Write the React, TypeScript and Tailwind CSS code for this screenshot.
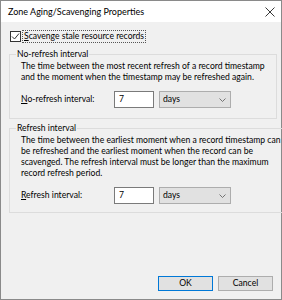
import React from 'react';

const font = { fontFamily: 'Lato, "Liberation Sans", Arial, sans-serif' };

const Chevron = () => (
  <svg width="7" height="4" viewBox="0 0 7 4" fill="none">
    <path d="M0.5 0.5 L3.5 3.5 L6.5 0.5" stroke="#666" strokeWidth="0.9" />
  </svg>
);

const IntervalRow = ({ label, accel }: { label: string; accel: string }) => (
  <div className="flex items-center h-[17px] mt-[8px]">
    <span className="w-[93px]">
      <span className="underline underline-offset-[1px]">{accel}</span>
      {label}
    </span>
    <div className="w-[40px] h-[17px] border border-[#7a7a7a] bg-white flex items-center pl-[4px]">7</div>
    <div className="ml-[5px] w-[72px] h-[17px] border border-[#adadad] bg-[#e1e1e1] flex items-center justify-between pl-[3px] pr-[4px]">
      <span>days</span>
      <Chevron />
    </div>
  </div>
);

const App = () => {
  return (
    <div
      className="w-[282px] h-[300px] border border-[#8a8a8a] bg-[#f0f0f0] flex flex-col text-[8.6px] leading-[11px] text-black whitespace-nowrap"
      style={font}
    >
      <div className="h-[21px] bg-white flex items-center justify-between pl-[7px] pr-[6px]">
        <span className="text-[9px]">Zone Aging/Scavenging Properties</span>
        <svg width="10" height="10" viewBox="0 0 10 10">
          <path d="M0.5 0.5 L9.5 9.5 M9.5 0.5 L0.5 9.5" stroke="#222" strokeWidth="0.9" />
        </svg>
      </div>

      <div className="flex-1 flex flex-col px-[8px] pb-[8px]">
        <div className="flex items-center mt-[8px] ml-[1px]">
          <div className="w-[11px] h-[11px] border border-[#333] bg-white flex items-center justify-center">
            <svg width="9" height="9" viewBox="0 0 9 9" fill="none">
              <path d="M1 4.5 L3.5 7 L8 1.5" stroke="#333" strokeWidth="1" />
            </svg>
          </div>
          <span className="ml-[1px] px-[1px] border border-dotted border-[#555]">
            <span className="underline underline-offset-[1px]">S</span>cavenge stale resource records
          </span>
        </div>

        <fieldset className="mt-[6px] border border-[#dcdcdc] px-[11px] pb-[10px]">
          <legend className="ml-[-5px] px-[1px]">No-refresh interval</legend>
          <p className="mt-[1px]">
            The time between the most recent refresh of a record timestamp
            <br />
            and the moment when the timestamp may be refreshed again.
          </p>
          <IntervalRow accel="N" label="o-refresh interval:" />
        </fieldset>

        <fieldset className="mt-[4px] border border-[#dcdcdc] px-[11px] pb-[8px]">
          <legend className="ml-[-5px] px-[1px]">Refresh interval</legend>
          <p className="mt-[1px]">
            The time between the earliest moment when a record timestamp can
            <br />
            be refreshed and the earliest moment when the record can be
            <br />
            scavenged. The refresh interval must be longer than the maximum
            <br />
            record refresh period.
          </p>
          <IntervalRow accel="R" label="efresh interval:" />
        </fieldset>

        <div className="flex-1" />

        <div className="flex justify-end gap-[5px]">
          <button className="w-[55px] h-[15px] border border-[#0078d7] bg-[#e1e1e1] leading-[13px]">OK</button>
          <button className="w-[55px] h-[15px] border border-[#adadad] bg-[#e1e1e1] leading-[13px]">Cancel</button>
        </div>
      </div>
    </div>
  );
};

export default App;
